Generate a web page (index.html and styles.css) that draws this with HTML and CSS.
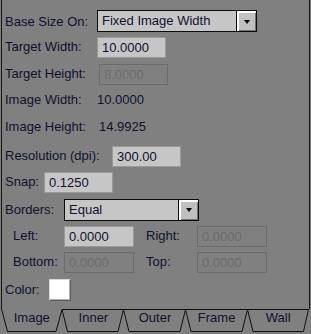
FILE: index.html
```html
<!DOCTYPE html>
<html lang="en">
<head>
    <meta charset="UTF-8">
    <title>Image Size</title>
    <link rel="stylesheet" href="styles.css">
</head>
<body>
    <main class="panel">
        <div class="row">
            <span class="lbl lbl-base">Base Size On:</span>
            <div class="select sel-base">
                <span class="sel-text">Fixed Image Width</span>
                <span class="sel-btn"><i class="caret"></i></span>
            </div>
        </div>
        <div class="row gap5">
            <span class="lbl up lbl-tw">Target Width:</span>
            <input class="field" type="text" value="10.0000">
        </div>
        <div class="row">
            <span class="lbl up lbl-th">Target Height:</span>
            <input class="field" type="text" value="8.0000" disabled>
        </div>
        <div class="row gap4">
            <span class="lbl lbl-iw">Image Width:</span>
            <span class="value">10.0000</span>
        </div>
        <div class="row">
            <span class="lbl lbl-ih">Image Height:</span>
            <span class="value">14.9925</span>
        </div>
        <div class="row gap9">
            <span class="lbl up lbl-res">Resolution (dpi):</span>
            <input class="field" type="text" value="300.00">
        </div>
        <div class="row gap5">
            <span class="lbl up lbl-snap">Snap:</span>
            <input class="field" type="text" value="0.1250">
        </div>
        <div class="row">
            <span class="lbl lbl-borders">Borders:</span>
            <div class="select sel-borders">
                <span class="sel-text">Equal</span>
                <span class="sel-btn"><i class="caret"></i></span>
            </div>
        </div>
        <div class="row">
            <span class="lbl up lbl-side">Left:</span>
            <input class="field wide" type="text" value="0.0000">
            <span class="lbl up lbl-side2">Right:</span>
            <input class="field wide" type="text" value="0.0000" disabled>
        </div>
        <div class="row gap5">
            <span class="lbl up lbl-side">Bottom:</span>
            <input class="field wide" type="text" value="0.0000" disabled>
            <span class="lbl up lbl-side2">Top:</span>
            <input class="field wide" type="text" value="0.0000" disabled>
        </div>
        <div class="row">
            <span class="lbl lbl-color">Color:</span>
            <span class="swatch"></span>
        </div>
    </main>
    <nav class="tabs">
        <svg class="tab-lines" width="311" height="25" viewBox="0 0 311 25">
            <path d="M62 0.5 H308.5" />
            <path d="M1.5 0 L7.5 22.5 H56 L62 0.5" />
            <path d="M62 0.5 L67.5 22.5 H118 L123.5 0.5" />
            <path d="M123.5 0.5 L129 22.5 H180 L185.5 0.5" />
            <path d="M185.5 0.5 L191 22.5 H242 L247.5 0.5" />
            <path d="M247.5 0.5 L253 22.5 H303.5 L308.5 0" />
        </svg>
        <div class="tab-labels">
            <span class="tab">Image</span>
            <span class="tab">Inner</span>
            <span class="tab">Outer</span>
            <span class="tab">Frame</span>
            <span class="tab">Wall</span>
        </div>
    </nav>
</body>
</html>
```

FILE: styles.css
```css
body {
    margin: 0;
    width: 311px;
    height: 334px;
    background-color: #808080;
    font-family: "Liberation Sans", Arial, sans-serif;
    font-size: 13px;
    color: #101030;
    overflow: hidden;
}

.panel {
    box-sizing: border-box;
    margin-left: 1px;
    width: 309px;
    height: 309px;
    padding: 10px 0 0 3px;
    border-left: 1px solid #141414;
    border-right: 1px solid #141414;
    display: flex;
    flex-direction: column;
}

.row {
    display: flex;
    align-items: center;
    height: 21px;
    margin-top: 6px;
}
.row:first-child {
    margin-top: 0;
    height: 22px;
}
.gap4 { margin-top: 4px; }
.gap5 { margin-top: 5px; }
.gap9 { margin-top: 9px; }

.lbl {
    flex: none;
    white-space: nowrap;
}
.lbl.up {
    margin-bottom: 3px;
}
.lbl-base { width: 92px; }
.lbl-tw { width: 92px; }
.lbl-th { width: 94px; }
.lbl-iw { width: 92px; }
.lbl-ih { width: 94px; }
.lbl-res { width: 107px; }
.lbl-snap { width: 39px; }
.lbl-borders { width: 59px; }
.lbl-side {
    margin-left: 8px;
    width: 51px;
}
.lbl-side2 {
    margin-left: 12px;
    width: 51px;
}
.lbl-color { width: 44px; }

.field {
    box-sizing: border-box;
    width: 69px;
    height: 21px;
    margin: 0;
    padding: 0 4px;
    font: inherit;
    color: #101030;
    background-color: #c6c6c6;
    border: 1px solid #9a9a9a;
    border-radius: 0;
    outline: none;
}
.field.wide {
    width: 70px;
}
.field:disabled {
    color: #6c6c6c;
    background-color: #808080;
    border-color: #6c6c6c;
}

.select {
    box-sizing: border-box;
    height: 22px;
    display: flex;
    background-color: #c6c6c6;
    border: 1px solid #0c0c0c;
}
.sel-base { width: 160px; }
.sel-borders { width: 135px; }
.sel-text {
    flex: 1;
    padding-left: 4px;
    line-height: 20px;
}
.sel-btn {
    box-sizing: border-box;
    width: 20px;
    display: flex;
    align-items: center;
    justify-content: center;
    background-color: #c0c0c0;
    border-left: 1px solid #0c0c0c;
    box-shadow: inset 2px 2px 0 #ffffff, inset -1px -1px 0 #707070;
}
.caret {
    width: 0;
    height: 0;
    margin: 1px 0 0 1px;
    border-left: 3px solid transparent;
    border-right: 3px solid transparent;
    border-top: 4px solid #000000;
}

.swatch {
    box-sizing: border-box;
    width: 22px;
    height: 22px;
    background-color: #ffffff;
    border: 1px solid;
    border-color: #d8d8d8 #5a5a5a #5a5a5a #d8d8d8;
    box-shadow: inset -1px -1px 0 #b0b0b0;
}

.tabs {
    display: grid;
    width: 311px;
    height: 25px;
}
.tabs > * {
    grid-area: 1 / 1;
}
.tab-lines path {
    fill: none;
    stroke: #101010;
    stroke-width: 1;
}
.tab-labels {
    display: flex;
    padding: 1px 0 0 1px;
}
.tab {
    width: 61.6px;
    text-align: center;
}
```
